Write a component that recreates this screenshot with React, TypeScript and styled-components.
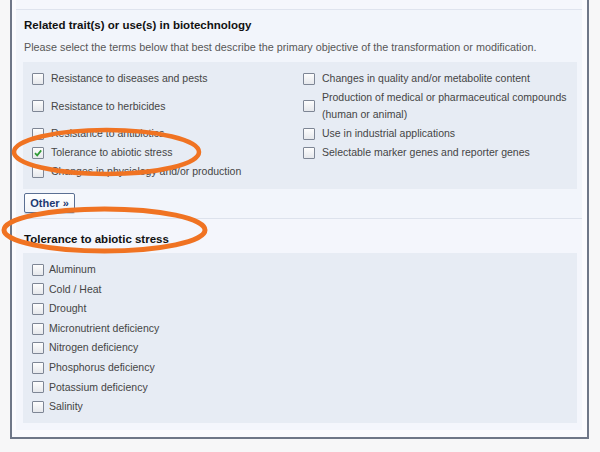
import React from 'react';
import styled, { createGlobalStyle } from 'styled-components';

const GlobalStyle = createGlobalStyle`
  *, *::before, *::after { box-sizing: border-box; }
  html, body { margin: 0; padding: 0; background: #f7f7f8; }
  body { font-family: "Liberation Sans", Arial, sans-serif; }
`;

const Page = styled.div`
  position: relative;
  width: 600px;
  height: 452px;
  overflow: hidden;
  background: #f7f7f8;
`;

const Frame = styled.div`
  margin-left: 10px;
  width: 579px;
  border: 2px solid #6f7788;
  border-top: none;
  padding: 0 5px 7px 4px;
  background: #fbfbfe;
`;

const TopStrip = styled.div`
  height: 10px;
  background: #f5f7fc;
  border-bottom: 1px solid #dfe4ee;
`;

const Section = styled.section<{ $top: number; $divider?: boolean }>`
  background: ${(p) => (p.$divider ? '#f4f6fc' : '#f2f5fb')};
  padding: ${(p) => p.$top}px 5px 0 7px;
  border-top: ${(p) => (p.$divider ? '1px solid #dde2ec' : 'none')};
  display: flex;
  flex-direction: column;
  align-items: flex-start;
`;

const Title = styled.h3`
  margin: 0 0 0 1px;
  font-size: 11.5px;
  line-height: 16px;
  font-weight: bold;
  color: #111111;
`;

const Description = styled.p`
  margin: 6px 0 0 1px;
  font-size: 10.8px;
  line-height: 16px;
  color: #575757;
  white-space: nowrap;
`;

const OptionGrid = styled.div`
  align-self: stretch;
  margin-top: 7px;
  background: #e7ecf4;
  padding: 8px 4px 9px 9px;
  display: grid;
  grid-template-columns: 271px 1fr;
  row-gap: 2px;
  align-items: center;
`;

const OptionList = styled.div`
  align-self: stretch;
  margin-top: 6px;
  background: #e7ecf4;
  padding: 7px 0 6px 9px;
  display: flex;
  flex-direction: column;
`;

const Option = styled.label<{ $gap: number; $lh: number }>`
  display: flex;
  align-items: center;
  gap: ${(p) => p.$gap}px;
  font-size: 10.5px;
  line-height: ${(p) => p.$lh}px;
  color: #454545;
  white-space: nowrap;
`;

const Box = styled.span`
  flex: none;
  width: 12px;
  height: 12px;
  border: 1px solid #7e8695;
  border-radius: 1px;
  background: linear-gradient(#fdfdfd, #e6e8ec);
  display: flex;
  align-items: center;
  justify-content: center;
`;

const OtherButton = styled.button`
  margin: 4px 0 5px 1px;
  width: 51px;
  height: 20px;
  padding: 0;
  border: 1px solid #5a6f93;
  border-radius: 2px;
  background: linear-gradient(#ffffff, #f1f4f9);
  color: #1c3a73;
  font-family: "Liberation Sans", Arial, sans-serif;
  font-size: 11px;
  font-weight: bold;
  box-shadow: 0 1px 0 #c9d1de;
`;

const Overlay = styled.svg`
  position: absolute;
  top: 0;
  left: 0;
  pointer-events: none;
`;

const Checkbox = ({ checked }: { checked?: boolean }) => (
  <Box>
    {checked && (
      <svg width="10" height="10" viewBox="0 0 10 10">
        <path d="M2 5.2 L4.2 7.4 L8.2 2.4" fill="none" stroke="#2f9a36" strokeWidth="1.7" />
      </svg>
    )}
  </Box>
);

const traits: { label: React.ReactNode; checked?: boolean }[] = [
  { label: 'Resistance to diseases and pests' },
  { label: 'Changes in quality and/or metabolite content' },
  { label: 'Resistance to herbicides' },
  { label: <>Production of medical or pharmaceutical compounds<br />(human or animal)</> },
  { label: 'Resistance to antibiotics' },
  { label: 'Use in industrial applications' },
  { label: 'Tolerance to abiotic stress', checked: true },
  { label: 'Selectable marker genes and reporter genes' },
  { label: 'Changes in physiology and/or production' },
];

const stresses = [
  'Aluminum',
  'Cold / Heat',
  'Drought',
  'Micronutrient deficiency',
  'Nitrogen deficiency',
  'Phosphorus deficiency',
  'Potassium deficiency',
  'Salinity',
];

export default function App() {
  return (
    <Page>
      <GlobalStyle />
      <Frame>
        <TopStrip />
        <Section $top={7}>
          <Title>Related trait(s) or use(s) in biotechnology</Title>
          <Description>
            Please select the terms below that best describe the primary objective of the transformation or modification.
          </Description>
          <OptionGrid>
            {traits.map((t, i) => (
              <Option key={i} $gap={7} $lh={17}>
                <Checkbox checked={t.checked} />
                <span>{t.label}</span>
              </Option>
            ))}
          </OptionGrid>
          <OtherButton>Other »</OtherButton>
        </Section>
        <Section $top={12} $divider>
          <Title>Tolerance to abiotic stress</Title>
          <OptionList>
            {stresses.map((s) => (
              <Option key={s} $gap={5} $lh={19.6}>
                <Checkbox />
                <span>{s}</span>
              </Option>
            ))}
          </OptionList>
          <div style={{ height: 7 }} />
        </Section>
      </Frame>
      <Overlay width="600" height="452" viewBox="0 0 600 452">
        <ellipse cx="106.5" cy="152" rx="92.5" ry="22" fill="none" stroke="#f07322" strokeWidth="4.5" />
        <ellipse cx="104.5" cy="230" rx="100.5" ry="21" fill="none" stroke="#f07322" strokeWidth="5" />
      </Overlay>
    </Page>
  );
}
